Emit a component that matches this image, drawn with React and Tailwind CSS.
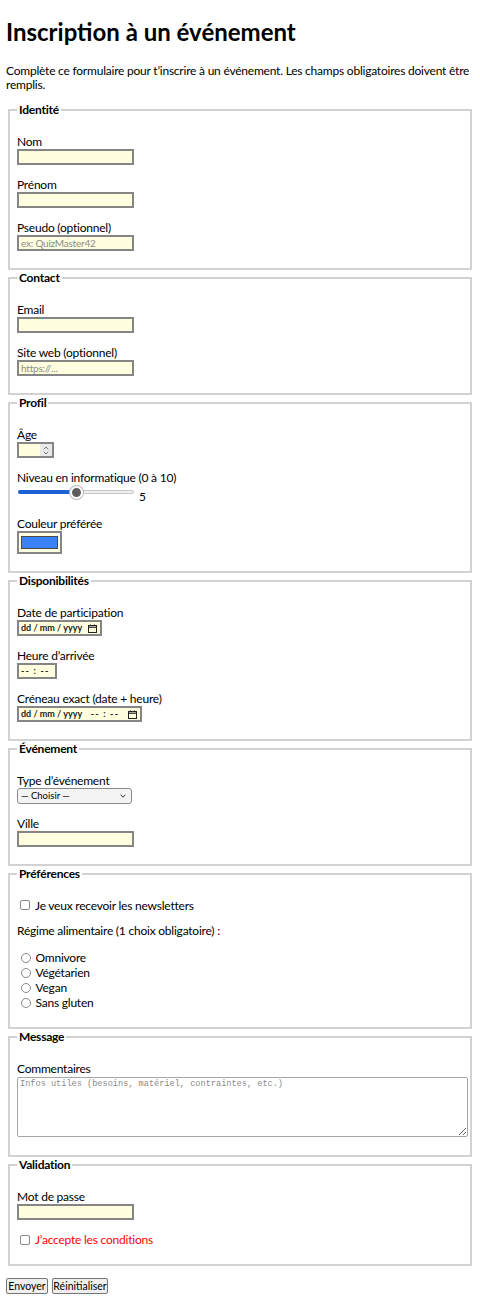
import React from "react";

function Section({ title, children }) {
  return (
    <fieldset className="mx-[2px] border-2 border-[#d2d2d2] px-[7px] pt-[4px] pb-[5px] min-w-0">
      <legend className="px-[2px] font-bold leading-[16px] text-[12px]">{title}</legend>
      <div className="flex flex-col gap-[12px] py-[12px]">{children}</div>
    </fieldset>
  );
}

function Field({ label, children }) {
  return (
    <div>
      <label className="block h-[15px] leading-[15px]">{label}</label>
      {children}
    </div>
  );
}

function TextInput({ placeholder, type = "text" }) {
  return (
    <input
      type={type}
      placeholder={placeholder}
      className="block w-[117px] h-[16px] bg-[#ffffe0] border-2 border-[#858585] px-[2px] text-[10px] leading-[12px] text-black outline-none placeholder:text-[#8a8a8a] [font-family:Lato,sans-serif]"
    />
  );
}

function CalendarIcon() {
  return (
    <svg width="9" height="9" viewBox="0 0 9 9" className="shrink-0">
      <rect x="0.5" y="1.5" width="8" height="7" fill="none" stroke="#222" strokeWidth="1" />
      <line x1="0.5" y1="3.2" x2="8.5" y2="3.2" stroke="#222" strokeWidth="1.2" />
      <line x1="2.5" y1="0.5" x2="2.5" y2="2" stroke="#222" strokeWidth="1" />
      <line x1="6.5" y1="0.5" x2="6.5" y2="2" stroke="#222" strokeWidth="1" />
    </svg>
  );
}

function Dashes() {
  return <span className="tracking-[1.2px]">-- : --</span>;
}

function DateLike({ width, date, time, icon }) {
  return (
    <div
      className={`flex items-center justify-between h-[16px] bg-[#ffffe0] border-2 border-[#858585] pl-[2px] pr-[3px] ${width}`}
    >
      <span className="text-[9px] font-bold leading-[10px] text-[#222] whitespace-pre tracking-normal">
        {date ? "dd / mm / yyyy" : null}
        {date && time ? "    " : null}
        {time ? <Dashes /> : null}
      </span>
      {icon ? <CalendarIcon /> : null}
    </div>
  );
}

function Checkbox() {
  return <span className="ml-[3px] shrink-0 w-[10px] h-[10px] border border-[#8a8a8a] rounded-[2px] bg-white" />;
}

function Radio({ label }) {
  return (
    <div className="flex items-center h-[15px]">
      <span className="ml-[3.5px] shrink-0 w-[10px] h-[10px] border border-[#8a8a8a] rounded-full bg-white" />
      <span className="ml-[5px]">{label}</span>
    </div>
  );
}

export default function App() {
  return (
    <div className="[font-family:Lato,sans-serif] text-black bg-white px-[6px] pt-[16px] pb-[12px] text-[12px] leading-[15px] tracking-[-0.22px]">
      <h1 className="text-[24px] leading-[32px] h-[32px] font-bold tracking-normal">Inscription à un événement</h1>
      <p className="mt-[16px] mb-[10px] leading-[14px]">
        Complète ce formulaire pour t’inscrire à un événement. Les champs obligatoires doivent être remplis.
      </p>

      <form className="block">
        <Section title="Identité">
          <Field label="Nom">
            <TextInput />
          </Field>
          <Field label="Prénom">
            <TextInput />
          </Field>
          <Field label="Pseudo (optionnel)">
            <TextInput placeholder="ex: QuizMaster42" />
          </Field>
        </Section>

        <Section title="Contact">
          <Field label="Email">
            <TextInput type="email" />
          </Field>
          <Field label="Site web (optionnel)">
            <TextInput placeholder="https://..." />
          </Field>
        </Section>

        <Section title="Profil">
          <Field label="Âge">
            <div className="flex justify-end w-[37px] h-[16px] bg-[#ffffe0] border-2 border-[#858585]">
              <div className="w-[12px] h-full bg-[#e9e9e9] flex flex-col items-center justify-center gap-[1px]">
                <svg width="6" height="4" viewBox="0 0 6 4">
                  <polyline points="0.8,3.3 3,1 5.2,3.3" fill="none" stroke="#6a6a6a" strokeWidth="0.9" />
                </svg>
                <svg width="6" height="4" viewBox="0 0 6 4">
                  <polyline points="0.8,0.7 3,3 5.2,0.7" fill="none" stroke="#6a6a6a" strokeWidth="0.9" />
                </svg>
              </div>
            </div>
          </Field>
          <Field label="Niveau en informatique (0 à 10)">
            <div className="flex items-start h-[19px]">
              <div className="relative ml-[1px] w-[116px] h-[14px]">
                <div className="absolute left-0 right-0 top-[5px] h-[4px] rounded-full bg-[#efefef] border border-[#c6c6c6]" />
                <div className="absolute left-0 w-[59px] top-[5px] h-[4px] rounded-full bg-[#1a62d6]" />
                <div className="absolute left-[52px] top-[0.5px] w-[13px] h-[13px] rounded-full bg-[#5e5e5e] border-2 border-white shadow-[0_0_0_1px_#b9b9b9]" />
              </div>
              <span className="ml-[5px] mt-[4px] leading-[15px]">5</span>
            </div>
          </Field>
          <Field label="Couleur préférée">
            <div className="w-[45px] h-[23px] bg-[#ffffe0] border-2 border-[#858585] px-[2px] py-[3px]">
              <div className="w-full h-full border border-[#4a4a4a] bg-[#3b82f6]" />
            </div>
          </Field>
        </Section>

        <Section title="Disponibilités">
          <Field label="Date de participation">
            <DateLike width="w-[85px]" date icon />
          </Field>
          <Field label="Heure d’arrivée">
            <DateLike width="w-[40px]" time />
          </Field>
          <Field label="Créneau exact (date + heure)">
            <DateLike width="w-[125px]" date time icon />
          </Field>
        </Section>

        <Section title="Événement">
          <Field label="Type d’événement">
            <div className="flex items-center justify-between w-[115px] h-[16px] bg-[#f3f3f3] border border-[#8a8a8a] rounded-[3px] pl-[3px] pr-[5px]">
              <span className="text-[9.5px] leading-[12px] tracking-normal">— Choisir —</span>
              <svg width="6" height="4" viewBox="0 0 6 4">
                <polyline points="0.6,0.7 3,3.2 5.4,0.7" fill="none" stroke="#333" strokeWidth="1" />
              </svg>
            </div>
          </Field>
          <Field label="Ville">
            <TextInput />
          </Field>
        </Section>

        <Section title="Préférences">
          <div className="flex items-center h-[14px]">
            <Checkbox />
            <span className="ml-[5px]">Je veux recevoir les newsletters</span>
          </div>
          <p className="h-[14px] leading-[14px]">Régime alimentaire (1 choix obligatoire) :</p>
          <div className="flex flex-col">
            <Radio label="Omnivore" />
            <Radio label="Végétarien" />
            <Radio label="Vegan" />
            <Radio label="Sans gluten" />
          </div>
        </Section>

        <Section title="Message">
          <Field label="Commentaires">
            <textarea
              placeholder="Infos utiles (besoins, matériel, contraintes, etc.)"
              className="block mt-[1px] mb-[1px] w-[451px] h-[60px] bg-white border border-[#a6a6a6] rounded-[2px] px-[2px] py-[1px] text-[8.6px] leading-[11px] tracking-normal outline-none [font-family:'Liberation_Mono',monospace] placeholder:text-[#8a8a8a]"
            />
          </Field>
        </Section>

        <Section title="Validation">
          <Field label="Mot de passe">
            <TextInput type="password" />
          </Field>
          <div className="flex items-center h-[15px]">
            <Checkbox />
            <span className="ml-[5px] text-[#ff0000]">J’accepte les conditions</span>
          </div>
        </Section>

        <div className="flex gap-[4px] mt-[12px]">
          <button
            type="button"
            className="w-[42px] h-[16px] bg-[#efefef] border border-[#767676] rounded-[2px] text-[10.5px] leading-[12px] tracking-normal text-black [font-family:Lato,sans-serif]"
          >
            Envoyer
          </button>
          <button
            type="button"
            className="w-[56px] h-[16px] bg-[#efefef] border border-[#767676] rounded-[2px] text-[10.5px] leading-[12px] tracking-normal text-black [font-family:Lato,sans-serif]"
          >
            Réinitialiser
          </button>
        </div>
      </form>
    </div>
  );
}
